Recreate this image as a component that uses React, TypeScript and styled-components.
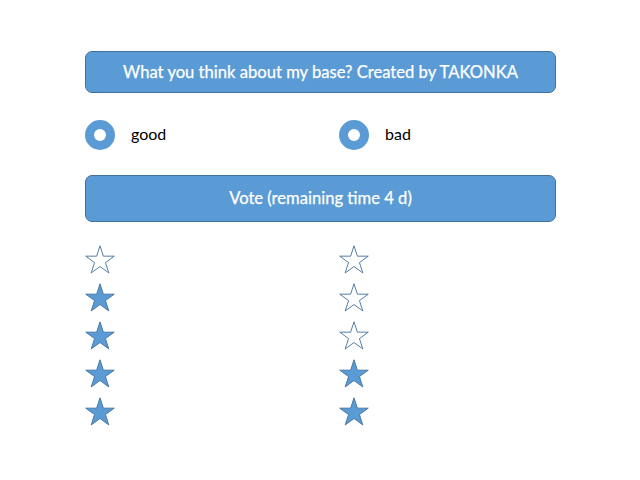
import styled, { createGlobalStyle } from "styled-components";

const GlobalStyle = createGlobalStyle`
  body {
    margin: 0;
    background: #fff;
    font-family: Lato, "Open Sans", sans-serif;
  }
`;

const Page = styled.div`
  display: flex;
  flex-direction: column;
  width: 471px;
  padding: 51px 0 0 85px;
`;

const Banner = styled.div<{ $h: number }>`
  display: flex;
  justify-content: center;
  align-items: center;
  height: ${(p) => p.$h}px;
  box-sizing: border-box;
  background: #5b9bd5;
  border: 1px solid #41719c;
  border-radius: 7px;
  color: #fff;
  font-size: 16.6px;
  padding-bottom: 1px;
  -webkit-text-stroke: 0.25px #fff;
`;

const Columns = styled.div`
  display: grid;
  grid-template-columns: 254px 1fr;
`;

const Choice = styled.div`
  display: flex;
  align-items: center;
  gap: 16px;
  font-size: 16px;
  color: #000;
  line-height: 1;
  padding-bottom: 0;
`;

const Label = styled.span`
  margin-top: -2px;
`;

const Radio = styled.div`
  width: 30px;
  height: 30px;
  box-sizing: border-box;
  border-radius: 50%;
  border: 9px solid #5b9bd5;
  background: #fff;
`;

const RadioRow = styled(Columns)`
  margin: 27px 0 25px;
`;

const StarGrid = styled(Columns)`
  margin-top: 23px;
  row-gap: 9px;
`;

const StarIcon = ({ filled }: { filled: boolean }) => (
  <svg width="30" height="29" viewBox="0 0 30 29">
    <polygon
      points="15,0.8 18.37,11.16 29.27,11.16 20.45,17.57 23.82,27.95 15,21.53 6.18,27.95 9.55,17.57 0.73,11.16 11.63,11.16"
      fill={filled ? "#5b9bd5" : "#fff"}
      stroke="#41719c"
      strokeWidth="0.9"
      strokeLinejoin="miter"
    />
  </svg>
);

const left = [false, true, true, true, true];
const right = [false, false, false, true, true];

function App() {
  return (
    <>
      <GlobalStyle />
      <Page>
        <Banner $h={42}>What you think about my base? Created by TAKONKA</Banner>
        <RadioRow>
          <Choice>
            <Radio />
            <Label>good</Label>
          </Choice>
          <Choice>
            <Radio />
            <Label>bad</Label>
          </Choice>
        </RadioRow>
        <Banner $h={47}>Vote (remaining time 4 d)</Banner>
        <StarGrid>
          {left.map((f, i) => [
            <StarIcon key={"l" + i} filled={f} />,
            <StarIcon key={"r" + i} filled={right[i]} />,
          ])}
        </StarGrid>
      </Page>
    </>
  );
}

export default App;
